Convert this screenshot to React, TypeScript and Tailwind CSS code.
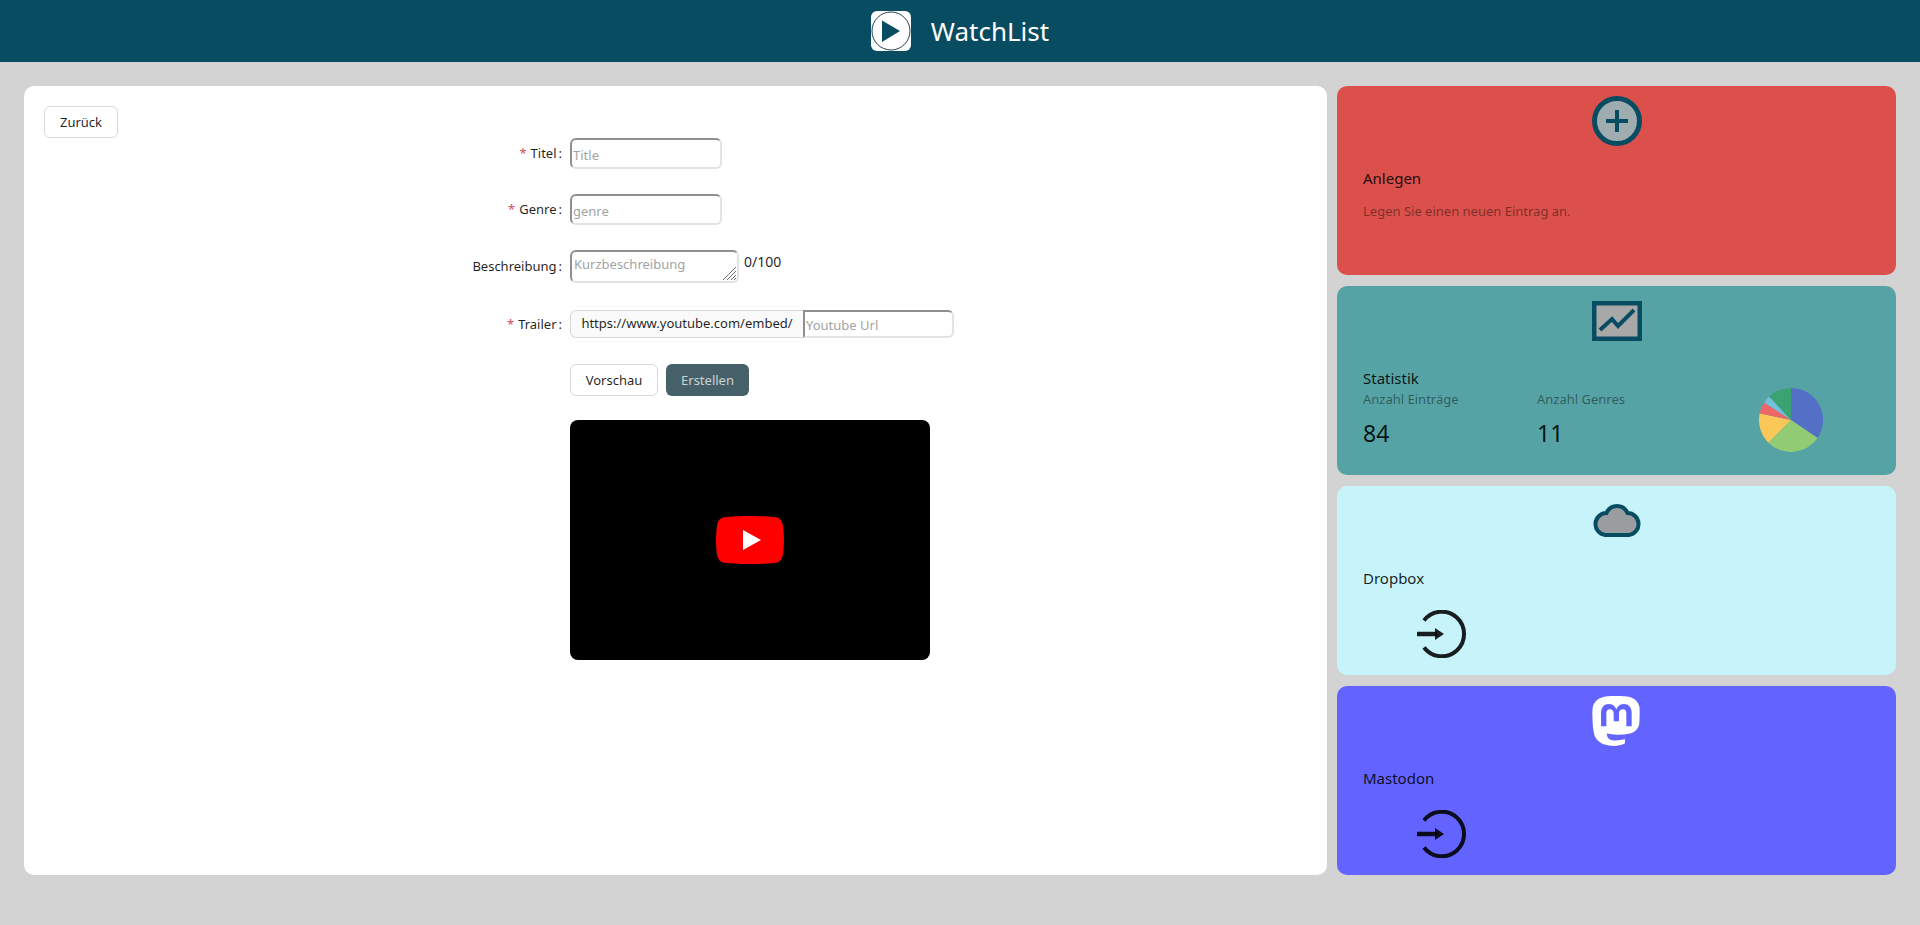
import { SiMastodon } from 'react-icons/si'

const inputClass =
  'h-full w-full rounded-[6px] border-2 border-t-[#8f8f8f] border-l-[#8f8f8f] border-r-[#e3e3e3] border-b-[#e3e3e3] bg-white px-[1px] pt-[2px] text-[13px] leading-none outline-none placeholder:text-[#a3a3a3]'

const PIE = [
  { from: 0, to: 124, color: '#5470c6' },
  { from: 124, to: 225, color: '#91cc75' },
  { from: 225, to: 282, color: '#fac858' },
  { from: 282, to: 303, color: '#ee6666' },
  { from: 303, to: 317, color: '#73c0de' },
  { from: 317, to: 360, color: '#3ba272' },
]

function slicePath(from: number, to: number) {
  const r = 32
  const point = (deg: number) => {
    const a = ((deg - 90) * Math.PI) / 180
    return `${32 + r * Math.cos(a)} ${32 + r * Math.sin(a)}`
  }
  return `M32 32 L${point(from)} A${r} ${r} 0 ${to - from > 180 ? 1 : 0} 1 ${point(to)} Z`
}

function LoginIcon() {
  return (
    <svg width="50" height="48" viewBox="0 0 50 48" className="mt-5 ml-[54px] block">
      <path d="M7 10.5 A22.3 22.3 0 1 1 7 37.5" fill="none" stroke="rgba(0,0,0,.88)" strokeWidth="4" />
      <path d="M0 24 H20" stroke="rgba(0,0,0,.88)" strokeWidth="4.5" />
      <path d="M18 18 L27 24 L18 30 Z" fill="rgba(0,0,0,.88)" />
    </svg>
  )
}

function FormRow({ label, required, className, children }: { label: string; required?: boolean; className: string; children: React.ReactNode }) {
  return (
    <div className={`flex items-center ${className}`}>
      <label className="w-[526px] shrink-0 pt-px pr-[7px] text-right text-[13px] text-[rgba(0,0,0,.88)]">
        {required && <span className="mr-1 text-[#d9485f]">*</span>}
        {label}
        <span className="ml-[2px] mr-[1px]">:</span>
      </label>
      {children}
    </div>
  )
}

export default function App() {
  return (
    <div className="h-[925px] overflow-hidden bg-[#d3d3d3] font-['Noto_Sans',sans-serif]">
      <header className="flex h-[62px] items-center justify-center gap-5 bg-[#084c61]">
        <svg width="40" height="40" viewBox="0 0 40 40">
          <rect width="40" height="40" rx="6" fill="#fff" />
          <circle cx="20" cy="20" r="19" fill="none" stroke="#1f4050" strokeWidth="1" />
          <path d="M11 9.5 L29 20 L11 31 Z" fill="#084c61" />
        </svg>
        <span className="text-[26px] leading-none text-white">WatchList</span>
      </header>

      <div className="flex gap-[10px] pt-6 pl-6">
        <main className="h-[789px] w-[1303px] rounded-[10px] bg-white p-5">
          <button className="h-8 w-[74px] rounded-[6px] border border-[#d9d9d9] bg-white pt-px text-[13px] text-[rgba(0,0,0,.88)]">
            Zurück
          </button>

          <form>
            <FormRow label="Titel" required className="h-[31px]">
              <div className="h-[31px] w-[152px]">
                <input className={inputClass} placeholder="Title" />
              </div>
            </FormRow>
            <FormRow label="Genre" required className="mt-[25px] h-[31px]">
              <div className="h-[31px] w-[152px]">
                <input className={inputClass} placeholder="genre" />
              </div>
            </FormRow>
            <FormRow label="Beschreibung" className="mt-[25px] h-[33px]">
              <div className="relative h-[33px] w-[169px]">
                <textarea
                  className="block h-[33px] w-full resize-none rounded-[6px] border-2 border-t-[#8f8f8f] border-l-[#8f8f8f] border-r-[#e3e3e3] border-b-[#e3e3e3] bg-white px-[2px] pt-[3px] text-[13px] outline-none placeholder:text-[#a3a3a3]"
                  placeholder="Kurzbeschreibung"
                  rows={1}
                />
                <svg width="15" height="15" viewBox="0 0 15 15" className="pointer-events-none absolute right-[2px] bottom-[2px]">
                  <path d="M1 14 L14 1 M5 14 L14 5 M9 14 L14 9 M12 14 L14 12" stroke="#6f6f6f" strokeWidth="1" />
                </svg>
              </div>
              <span className="mb-[10px] ml-[5px] text-sm text-[rgba(0,0,0,.88)]">0/100</span>
            </FormRow>
            <FormRow label="Trailer" required className="mt-[27px] h-[28px]">
              <span className="flex h-[28px] w-[233px] items-center justify-center rounded-l-[6px] border border-r-0 border-[#d9d9d9] bg-[#fafafa] text-[13px] text-[rgba(0,0,0,.88)]">
                https://www.youtube.com/embed/
              </span>
              <div className="h-[28px] w-[151px]">
                <input className={`${inputClass} rounded-l-none`} placeholder="Youtube Url" />
              </div>
            </FormRow>

            <div className="mt-[26px] ml-[526px] flex gap-2">
              <button type="button" className="h-8 w-[88px] rounded-[6px] border border-[#d9d9d9] bg-white pt-px text-[13px] text-[rgba(0,0,0,.88)]">
                Vorschau
              </button>
              <button type="button" className="h-8 w-[83px] rounded-[6px] bg-[#466069] pt-px text-[13px] text-[#c9d2d5]">
                Erstellen
              </button>
            </div>

            <div className="mt-6 ml-[526px] flex h-[240px] w-[360px] items-center justify-center rounded-lg bg-black">
              <svg width="68" height="48" viewBox="0 0 68 48">
                <path
                  d="M66.52,7.74c-0.78-2.93-2.49-5.41-5.42-6.19C55.79,.13,34,0,34,0S12.21,.13,6.9,1.55 C3.97,2.33,2.27,4.81,1.48,7.74C0.06,13.05,0,24,0,24s0.06,10.95,1.48,16.26c0.78,2.93,2.49,5.41,5.42,6.19 C12.21,47.87,34,48,34,48s21.79-0.13,27.1-1.55c2.93-0.78,4.64-3.26,5.42-6.19C67.94,34.95,68,24,68,24S67.94,13.05,66.52,7.74z"
                  fill="#f00"
                />
                <path d="M45 24 L27 14 L27 34 Z" fill="#fff" />
              </svg>
            </div>
          </form>
        </main>

        <aside className="flex w-[559px] flex-col gap-[11px]">
          <section className="h-[189px] rounded-[10px] bg-[#db504a] pt-[10px] pl-[26px]">
            <svg width="50" height="50" viewBox="0 0 50 50" className="ml-[229px] block">
              <circle cx="25" cy="25" r="22.5" fill="#9fadb1" stroke="#084c61" strokeWidth="5" />
              <path d="M14 25 H36 M25 14 V36" stroke="#084c61" strokeWidth="4" />
            </svg>
            <h2 className="mt-5 text-[15px] leading-6 text-[rgba(0,0,0,.88)]">Anlegen</h2>
            <p className="mt-[10px] text-[13px] leading-[22px] text-[rgba(0,0,0,.45)]">Legen Sie einen neuen Eintrag an.</p>
          </section>

          <section className="h-[189px] rounded-[10px] bg-[#56a3a6] pt-[10px] pl-[26px]">
            <svg width="50" height="50" viewBox="0 0 50 50" className="ml-[229px] block">
              <rect x="2.25" y="7.25" width="45.5" height="35.5" fill="#a8a8a8" stroke="#084c61" strokeWidth="4.5" />
              <path d="M8 34 L20 23 L26 30 L42 14" fill="none" stroke="#084c61" strokeWidth="4" />
            </svg>
            <h2 className="mt-5 text-[15px] leading-6 text-[rgba(0,0,0,.88)]">Statistik</h2>
            <div className="-mt-[2px] flex">
              <div className="w-[174px]">
                <p className="text-[13px] leading-[22px] text-[rgba(0,0,0,.45)]">Anzahl Einträge</p>
                <p className="mt-[7px] text-[23px] leading-8 text-[rgba(0,0,0,.88)]">84</p>
              </div>
              <div className="w-[222px]">
                <p className="text-[13px] leading-[22px] text-[rgba(0,0,0,.45)]">Anzahl Genres</p>
                <p className="mt-[7px] text-[23px] leading-8 text-[rgba(0,0,0,.88)]">11</p>
              </div>
              <svg width="64" height="64" viewBox="0 0 64 64">
                {PIE.map((s) => (
                  <path key={s.color} d={slicePath(s.from, s.to)} fill={s.color} />
                ))}
              </svg>
            </div>
          </section>

          <section className="h-[189px] rounded-[10px] bg-[#c6f4fa] pt-[10px] pl-[26px]">
            <svg width="50" height="50" viewBox="0 0 50 50" className="ml-[229px] block">
              <path
                d="M13 39 A11 11 0 0 1 14.5 17.1 A11.3 11.3 0 0 1 35.5 17.1 A11 11 0 0 1 37 39 Z"
                fill="#9a9d9f"
                stroke="#084c61"
                strokeWidth="4"
              />
            </svg>
            <h2 className="mt-5 text-[15px] leading-6 text-[rgba(0,0,0,.88)]">Dropbox</h2>
            <LoginIcon />
          </section>

          <section className="h-[189px] rounded-[10px] bg-[#6364ff] pt-[10px] pl-[26px]">
            <SiMastodon size={50} color="#fff" className="ml-[228px] block" />
            <h2 className="mt-5 text-[15px] leading-6 text-[rgba(0,0,0,.88)]">Mastodon</h2>
            <LoginIcon />
          </section>
        </aside>
      </div>
    </div>
  )
}
